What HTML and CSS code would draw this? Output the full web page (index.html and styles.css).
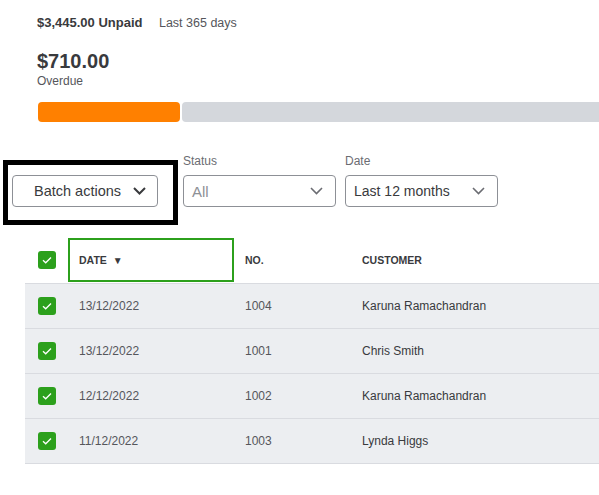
FILE: index.html
```html
<!DOCTYPE html>
<html lang="en">
<head>
    <meta charset="UTF-8">
    <meta name="viewport" content="width=device-width, initial-scale=1.0">
    <title>Invoices</title>
    <link rel="stylesheet" href="styles.css">
</head>
<body>
    <div class="summary">
        <div class="summary-top">
            <span class="unpaid">$3,445.00 Unpaid</span>
            <span class="period">Last 365 days</span>
        </div>
        <div class="amount">$710.00</div>
        <div class="amount-label">Overdue</div>
    </div>

    <div class="progress">
        <div class="progress-overdue"></div>
        <div class="progress-rest"></div>
    </div>

    <div class="filters">
        <div class="highlight">
            <button class="batch-btn">
                Batch actions
                <svg class="chevron" width="13" height="8" viewBox="0 0 13 8"><path d="M1 1l5.5 5.5L12 1" fill="none" stroke="#393a3d" stroke-width="2"/></svg>
            </button>
        </div>
        <div class="filter">
            <div class="filter-label">Status</div>
            <div class="select placeholder">
                All
                <svg class="chevron" width="13" height="8" viewBox="0 0 13 8"><path d="M1 1l5.5 5.5L12 1" fill="none" stroke="#6b6c72" stroke-width="1.6"/></svg>
            </div>
        </div>
        <div class="filter">
            <div class="filter-label">Date</div>
            <div class="select">
                Last 12 months
                <svg class="chevron" width="13" height="8" viewBox="0 0 13 8"><path d="M1 1l5.5 5.5L12 1" fill="none" stroke="#6b6c72" stroke-width="1.6"/></svg>
            </div>
        </div>
    </div>

    <div class="table">
        <div class="row head">
            <div class="cell check-cell"><span class="checkbox"><svg width="18" height="18" viewBox="0 0 18 18"><path d="M5 9.2l2.7 2.6L13 6.5" fill="none" stroke="#fff" stroke-width="1.3"/></svg></span></div>
            <div class="cell sorted">DATE <span class="sort-arrow">▼</span></div>
            <div class="cell">NO.</div>
            <div class="cell">CUSTOMER</div>
        </div>
        <div class="row">
            <div class="cell check-cell"><span class="checkbox"><svg width="18" height="18" viewBox="0 0 18 18"><path d="M5 9.2l2.7 2.6L13 6.5" fill="none" stroke="#fff" stroke-width="1.3"/></svg></span></div>
            <div class="cell muted">13/12/2022</div>
            <div class="cell muted">1004</div>
            <div class="cell name">Karuna Ramachandran</div>
        </div>
        <div class="row">
            <div class="cell check-cell"><span class="checkbox"><svg width="18" height="18" viewBox="0 0 18 18"><path d="M5 9.2l2.7 2.6L13 6.5" fill="none" stroke="#fff" stroke-width="1.3"/></svg></span></div>
            <div class="cell muted">13/12/2022</div>
            <div class="cell muted">1001</div>
            <div class="cell name">Chris Smith</div>
        </div>
        <div class="row">
            <div class="cell check-cell"><span class="checkbox"><svg width="18" height="18" viewBox="0 0 18 18"><path d="M5 9.2l2.7 2.6L13 6.5" fill="none" stroke="#fff" stroke-width="1.3"/></svg></span></div>
            <div class="cell muted">12/12/2022</div>
            <div class="cell muted">1002</div>
            <div class="cell name">Karuna Ramachandran</div>
        </div>
        <div class="row">
            <div class="cell check-cell"><span class="checkbox"><svg width="18" height="18" viewBox="0 0 18 18"><path d="M5 9.2l2.7 2.6L13 6.5" fill="none" stroke="#fff" stroke-width="1.3"/></svg></span></div>
            <div class="cell muted">11/12/2022</div>
            <div class="cell muted">1003</div>
            <div class="cell name">Lynda Higgs</div>
        </div>
    </div>
</body>
</html>
```

FILE: styles.css
```css
body {
    margin: 0;
    font-family: 'Liberation Sans', Arial, sans-serif;
    color: #393a3d;
    background-color: #fff;
    overflow: hidden;
}

.summary {
    padding: 14px 0 0 37px;
}

.summary-top {
    line-height: 16px;
}

.unpaid {
    font-size: 13px;
    font-weight: bold;
    color: #393a3d;
}

.period {
    font-size: 12.5px;
    color: #55565b;
    margin-left: 12px;
}

.amount {
    margin-top: 18px;
    font-size: 20px;
    font-weight: bold;
    line-height: 24px;
}

.amount-label {
    font-size: 12px;
    color: #55565b;
    line-height: 16px;
}

.progress {
    display: flex;
    gap: 2px;
    margin: 13px 0 0 38px;
    height: 20px;
}

.progress-overdue {
    width: 142px;
    background-color: #ff8000;
    border-radius: 4px;
}

.progress-rest {
    flex: 1;
    background-color: #d4d7dc;
    border-radius: 4px 0 0 4px;
}

.filters {
    display: flex;
    align-items: flex-start;
    margin: 31px 0 0 3px;
}

.highlight {
    margin-top: 7px;
    border: 5px solid #000;
    padding: 10px 15px 13px 4px;
}

.batch-btn {
    display: flex;
    align-items: center;
    justify-content: space-between;
    width: 146px;
    height: 32px;
    padding: 0 11px 0 21px;
    border: 1px solid #8d9096;
    border-radius: 4px;
    background: #fff;
    font-family: inherit;
    font-size: 14.5px;
    color: #393a3d;
    box-sizing: border-box;
}

.filter {
    margin-left: 5px;
    width: 153px;
}

.filter + .filter {
    margin-left: 9px;
}

.filter-label {
    font-size: 12px;
    line-height: 16px;
    color: #6b6c72;
    margin-bottom: 6px;
}

.select {
    display: flex;
    align-items: center;
    justify-content: space-between;
    height: 32px;
    padding: 0 12px 0 8px;
    border: 1px solid #8d9096;
    border-radius: 4px;
    font-size: 14px;
    color: #393a3d;
    box-sizing: border-box;
}

.select.placeholder {
    color: #8d9096;
    font-size: 15px;
}

.table {
    margin: 12px 0 0 25px;
}

.row {
    display: grid;
    grid-template-columns: 43px 166px 117px 1fr;
    height: 44px;
    border-bottom: 1px solid #d9dbe0;
    background-color: #eceef1;
    align-items: center;
}

.row.head {
    height: 46px;
    background-color: #fff;
}

.cell {
    padding-left: 11px;
    font-size: 12px;
}

.check-cell {
    padding-left: 13px;
    display: flex;
}

.checkbox {
    display: block;
    width: 18px;
    height: 18px;
    border-radius: 3px;
    background-color: #2ca01c;
}

.checkbox svg {
    display: block;
}

.head .cell {
    font-size: 10.5px;
    font-weight: bold;
    color: #393a3d;
}

.head .sorted {
    align-self: stretch;
    display: flex;
    align-items: center;
    margin: 1px 0;
    padding-left: 9px;
    border: 2px solid #2ca01c;
}

.sort-arrow {
    font-size: 10px;
    margin-left: 6px;
}

.muted {
    color: #55565b;
}

.name {
    color: #393a3d;
}
```
